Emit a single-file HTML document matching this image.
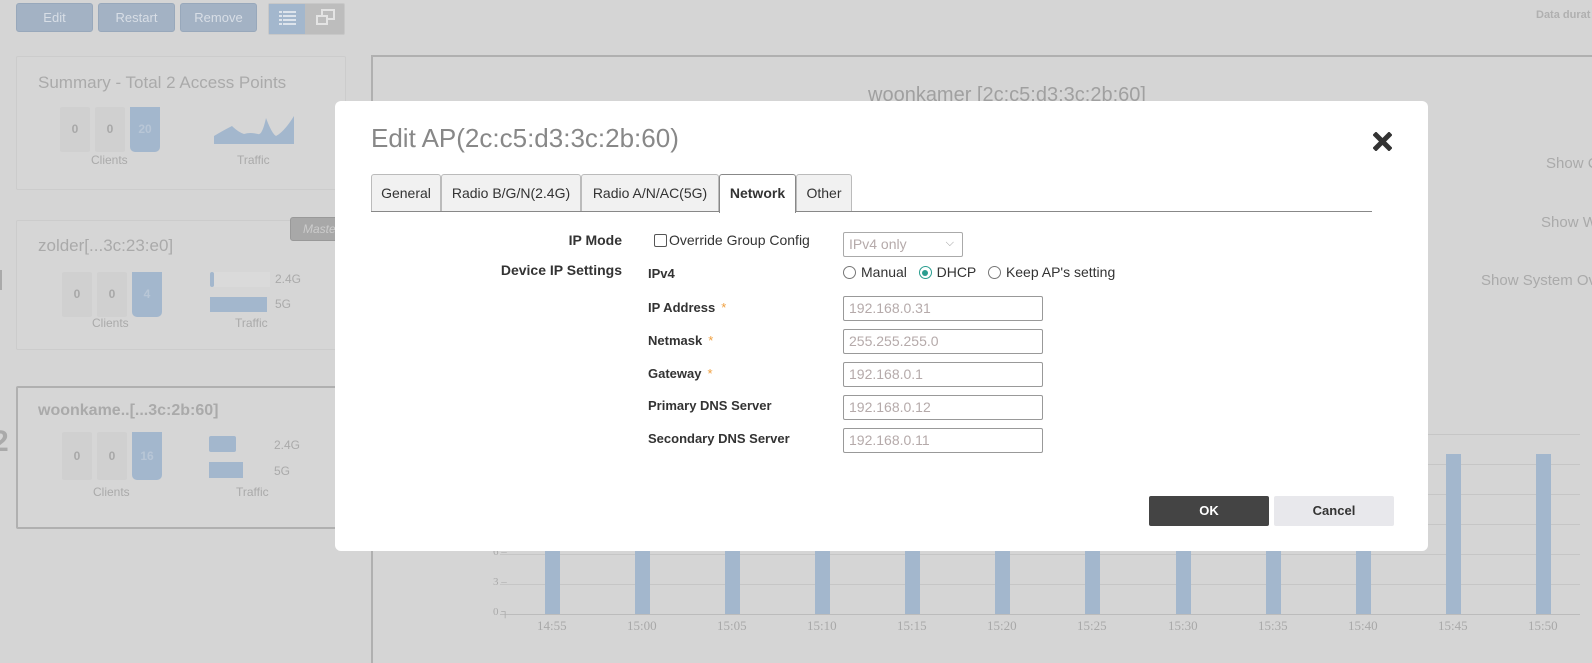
<!DOCTYPE html>
<html style="height:663px;overflow:hidden"><head><meta charset="utf-8"><style>
*{box-sizing:border-box;margin:0;padding:0}
body{width:1592px;height:663px;background:#d5d5d5;font-family:"Liberation Sans",sans-serif;position:relative;overflow:hidden;color:#aaa}
.a{position:absolute;white-space:nowrap}
.btn{position:absolute;top:3px;height:29px;background:#a3b2c4;border:1px solid #98a8bb;border-radius:3px;color:#d8dee6;font-size:13px;text-align:center;line-height:27px}
.card{position:absolute;left:16px;width:330px;border:1px solid #cccccc;background:#d6d6d6;border-radius:2px}
.st{position:absolute;width:30px;height:45px;background:#d0d0d0;border-radius:2px;font-size:12px;font-weight:bold;color:#a8a8a8;text-align:center;line-height:45px}
.st.b{background:#a3b7cd;color:#b8c6d6;border-radius:0 0 5px 5px}
.lbl{position:absolute;font-size:12px;color:#aaa}
.modal{position:absolute;left:335px;top:101px;width:1093px;height:450px;background:#fff;border-radius:6px}
.tab{position:absolute;top:73px;height:38px;border:1px solid #bbb;border-bottom:none;background:#f1f1f1;border-radius:3px 3px 0 0;font-size:14px;color:#333;line-height:36px;text-align:center}
.fl{position:absolute;font-size:13px;font-weight:bold;color:#333;white-space:nowrap}
.inp{position:absolute;left:508px;width:200px;height:25px;border:1px solid #999;border-radius:2px;font-size:14px;color:#b5aaaa;padding-left:5px;line-height:23px}
.star{color:#f0a040;margin-left:6px;font-weight:normal}
.radio{display:inline-block;width:13px;height:13px;border:1px solid #777;border-radius:50%;vertical-align:-2px;margin-right:5px;position:relative}
.bar{position:absolute;width:15px;background:#a3b7cd}
.grid{position:absolute;left:500px;width:1080px;height:1px;background:#c6c6c6}
.tl{position:absolute;top:618px;font-family:"Liberation Serif",serif;font-size:13px;color:#a8a8a8}
</style></head><body>
<div class="btn" style="left:16px;width:77px">Edit</div>
<div class="btn" style="left:98px;width:77px">Restart</div>
<div class="btn" style="left:180px;width:77px">Remove</div>
<div class="a" style="left:268px;top:3px;width:77px;height:32px;border:1px solid #c8c8c8;border-radius:2px;background:#bdbdbd"></div>
<div class="a" style="left:269px;top:4px;width:36px;height:30px;background:#a3b7cd"></div>
<svg class="a" style="left:279px;top:11px" width="17" height="14"><g fill="#dde4ec"><rect x="0" y="0" width="3" height="2"/><rect x="4" y="0" width="13" height="2"/><rect x="0" y="4" width="3" height="2"/><rect x="4" y="4" width="13" height="2"/><rect x="0" y="8" width="3" height="2"/><rect x="4" y="8" width="13" height="2"/><rect x="0" y="12" width="3" height="2"/><rect x="4" y="12" width="13" height="2"/></g></svg>
<svg class="a" style="left:316px;top:9px" width="20" height="17"><rect x="6" y="1" width="12" height="9" fill="none" stroke="#e4e4e4" stroke-width="2"/><rect x="1" y="7" width="10" height="8" fill="#bdbdbd" stroke="#e4e4e4" stroke-width="2"/></svg>
<div class="a" style="left:1536px;top:9px;font-size:11px;font-weight:bold;color:#b0b0b0">Data durat</div>

<div class="card" style="top:56px;height:134px">
<div class="a" style="left:21px;top:16px;font-size:17px;color:#aaa">Summary - Total 2 Access Points</div>
<div class="st" style="left:43px;top:50px">0</div><div class="st" style="left:78px;top:50px">0</div><div class="st b" style="left:113px;top:50px">20</div>
<div class="lbl" style="left:74px;top:96px">Clients</div>
<svg class="a" style="left:197px;top:59px" width="80" height="28"><path d="M0 20 Q10 14 18 10 Q24 16 30 18 Q36 16 44 18 Q48 20 52 2 Q58 18 62 20 Q70 16 80 0 L80 28 L0 28Z" fill="#a3b7cd"/></svg>
<div class="lbl" style="left:220px;top:96px">Traffic</div>
</div>

<div class="a" style="left:0;top:270px;width:2px;height:20px;background:#aaa"></div>
<div class="card" style="top:220px;height:130px">
<div class="a" style="left:21px;top:15px;font-size:17px;color:#aaa">zolder[...3c:23:e0]</div>
<div class="st" style="left:45px;top:51px">0</div><div class="st" style="left:80px;top:51px">0</div><div class="st b" style="left:115px;top:51px">4</div>
<div class="lbl" style="left:75px;top:95px">Clients</div>
<div class="a" style="left:193px;top:51px;width:60px;height:15px;background:#dadada"></div>
<div class="a" style="left:193px;top:51px;width:4px;height:15px;background:#a3b7cd;border-radius:2px"></div>
<div class="lbl" style="left:258px;top:51px">2.4G</div>
<div class="a" style="left:193px;top:76px;width:57px;height:15px;background:#a3b7cd"></div>
<div class="lbl" style="left:258px;top:76px">5G</div>
<div class="lbl" style="left:218px;top:95px">Traffic</div>
</div>
<div class="a" style="left:290px;top:217px;width:60px;height:24px;background:#a8a8a8;border:1px solid #999;border-radius:3px;color:#ccc;font-size:12px;font-style:italic;line-height:22px;padding-left:12px">Master</div>

<div class="a" style="left:0;top:425px;font-size:30px;font-weight:bold;color:#aaa;margin-left:-8px">2</div>
<div class="card" style="top:386px;height:143px;border:2px solid #b0b0b0">
<div class="a" style="left:20px;top:14px;font-size:16px;font-weight:bold;color:#aaa">woonkame..[...3c:2b:60]</div>
<div class="st" style="left:44px;top:44px;height:48px;line-height:48px">0</div><div class="st" style="left:79px;top:44px;height:48px;line-height:48px">0</div><div class="st b" style="left:114px;top:44px;height:48px;line-height:48px">16</div>
<div class="lbl" style="left:75px;top:97px">Clients</div>
<div class="a" style="left:191px;top:48px;width:27px;height:16px;background:#a3b7cd;border-radius:2px"></div>
<div class="lbl" style="left:256px;top:50px">2.4G</div>
<div class="a" style="left:191px;top:74px;width:34px;height:16px;background:#a3b7cd"></div>
<div class="lbl" style="left:256px;top:76px">5G</div>
<div class="lbl" style="left:218px;top:97px">Traffic</div>
</div>

<div class="a" style="left:371px;top:55px;width:1221px;height:608px;border-left:2px solid #b0b0b0;border-top:2px solid #b0b0b0"></div>
<div class="a" style="left:868px;top:84px;font-size:20px;color:#a0a0a0">woonkamer [2c:c5:d3:3c:2b:60]</div>
<div class="a" style="left:1546px;top:155px;font-size:15px;color:#aaa">Show C</div>
<div class="a" style="left:1541px;top:214px;font-size:15px;color:#aaa">Show W</div>
<div class="a" style="left:1481px;top:272px;font-size:15px;color:#aaa">Show System Ove</div>

<div class="grid" style="top:434px"></div><div class="grid" style="top:464px"></div><div class="grid" style="top:494px"></div><div class="grid" style="top:524px"></div><div class="grid" style="top:554px"></div><div class="grid" style="top:584px"></div><div class="grid" style="top:614px;background:#bcbcbc"></div>
<div class="a" style="left:493px;top:546px;font-size:11px;font-family:'Liberation Serif',serif">6 –</div>
<div class="a" style="left:493px;top:576px;font-size:11px;font-family:'Liberation Serif',serif">3 –</div>
<div class="a" style="left:493px;top:606px;font-size:11px;font-family:'Liberation Serif',serif">0 ┐</div>
<div class="bar" style="left:545px;top:530px;height:84px"></div>
<div class="bar" style="left:635px;top:530px;height:84px"></div>
<div class="bar" style="left:725px;top:530px;height:84px"></div>
<div class="bar" style="left:815px;top:530px;height:84px"></div>
<div class="bar" style="left:905px;top:530px;height:84px"></div>
<div class="bar" style="left:995px;top:530px;height:84px"></div>
<div class="bar" style="left:1085px;top:530px;height:84px"></div>
<div class="bar" style="left:1176px;top:530px;height:84px"></div>
<div class="bar" style="left:1266px;top:530px;height:84px"></div>
<div class="bar" style="left:1356px;top:530px;height:84px"></div>
<div class="bar" style="left:1446px;top:454px;height:160px"></div>
<div class="bar" style="left:1536px;top:454px;height:160px"></div>
<div class="tl" style="left:537px">14:55</div><div class="tl" style="left:627px">15:00</div><div class="tl" style="left:717px">15:05</div><div class="tl" style="left:807px">15:10</div><div class="tl" style="left:897px">15:15</div><div class="tl" style="left:987px">15:20</div><div class="tl" style="left:1077px">15:25</div><div class="tl" style="left:1168px">15:30</div><div class="tl" style="left:1258px">15:35</div><div class="tl" style="left:1348px">15:40</div><div class="tl" style="left:1438px">15:45</div><div class="tl" style="left:1528px">15:50</div>

<div class="modal">
<div class="a" style="left:36px;top:22px;font-size:26px;color:#888">Edit AP(2c:c5:d3:3c:2b:60)</div>
<svg class="a" style="left:1038px;top:31px" width="19" height="19"><path d="M3 3L16 16M16 3L3 16" stroke="#333" stroke-width="5" stroke-linecap="square"/></svg>
<div class="tab" style="left:36px;width:70px">General</div>
<div class="tab" style="left:106px;width:140px">Radio B/G/N(2.4G)</div>
<div class="tab" style="left:246px;width:138px">Radio A/N/AC(5G)</div>
<div class="tab" style="left:384px;width:77px;background:#fff;border-color:#888;height:39px;font-weight:bold;z-index:2">Network</div>
<div class="tab" style="left:461px;width:56px">Other</div>
<div class="a" style="left:36px;top:110px;width:1001px;height:1px;background:#888"></div>

<div class="fl" style="left:182px;width:105px;text-align:right;top:131px;font-size:14px">IP Mode</div>
<div class="a" style="left:319px;top:133px;width:13px;height:13px;border:1.5px solid #555;border-radius:2px"></div>
<div class="a" style="left:334px;top:131px;font-size:14px;color:#333">Override Group Config</div>
<div class="a" style="left:508px;top:131px;width:120px;height:25px;border:1px solid #aaa;border-radius:2px;font-size:14px;color:#b5aaaa;padding-left:5px;line-height:23px">IPv4 only<span style="position:absolute;right:8px;top:-1px;font-size:11px;color:#999">⌵</span></div>
<div class="fl" style="left:140px;width:147px;text-align:right;top:161px;font-size:14px">Device IP Settings</div>
<div class="fl" style="left:313px;top:165px">IPv4</div>
<div class="a" style="left:508px;top:163px;font-size:14px;color:#333;white-space:nowrap"><span class="radio"></span>Manual&nbsp;&nbsp;&nbsp;<span class="radio" style="border-color:#2a9d8f"><span style="position:absolute;left:2.5px;top:2.5px;width:6px;height:6px;border-radius:50%;background:#2a9d8f"></span></span>DHCP&nbsp;&nbsp;&nbsp;<span class="radio"></span>Keep AP's setting</div>

<div class="fl" style="left:313px;top:199px">IP Address<span class="star">*</span></div>
<div class="inp" style="top:195px">192.168.0.31</div>
<div class="fl" style="left:313px;top:232px">Netmask<span class="star">*</span></div>
<div class="inp" style="top:228px">255.255.255.0</div>
<div class="fl" style="left:313px;top:265px">Gateway<span class="star">*</span></div>
<div class="inp" style="top:261px">192.168.0.1</div>
<div class="fl" style="left:313px;top:297px">Primary DNS Server</div>
<div class="inp" style="top:294px">192.168.0.12</div>
<div class="fl" style="left:313px;top:330px">Secondary DNS Server</div>
<div class="inp" style="top:327px">192.168.0.11</div>

<div class="a" style="left:814px;top:395px;width:120px;height:30px;background:#444;border-radius:2px;color:#fff;font-size:13px;font-weight:bold;text-align:center;line-height:30px">OK</div>
<div class="a" style="left:939px;top:395px;width:120px;height:30px;background:#e8e8ec;border-radius:2px;color:#333;font-size:13px;font-weight:bold;text-align:center;line-height:30px">Cancel</div>
</div>
</body></html>
